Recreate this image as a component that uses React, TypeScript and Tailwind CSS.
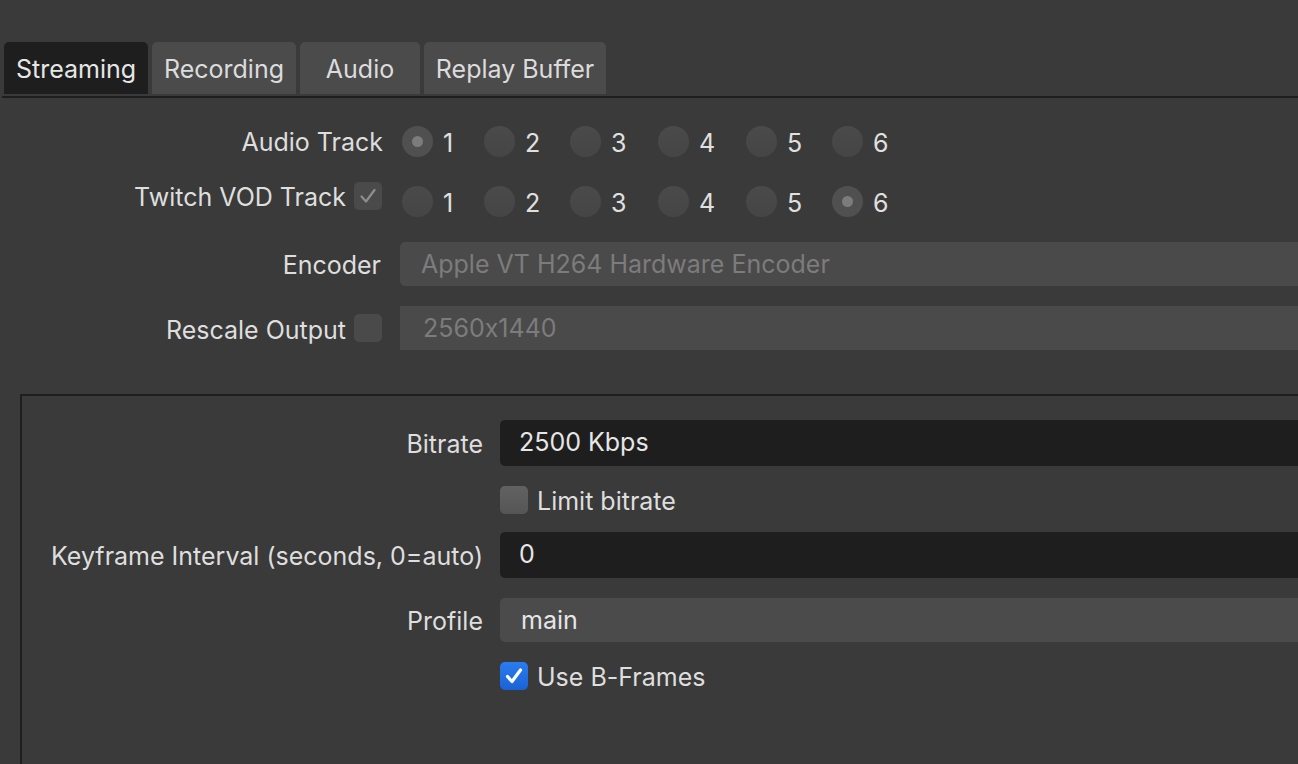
import React from 'react';

const TABS = [
  { name: 'Streaming', w: 'w-[144px]', active: true },
  { name: 'Recording', w: 'w-[144px]', active: false },
  { name: 'Audio', w: 'w-[120px]', active: false },
  { name: 'Replay Buffer', w: 'w-[182px]', active: false },
];

const TRACKS = [
  { n: 1, w: 'w-[82px]' },
  { n: 2, w: 'w-[86px]' },
  { n: 3, w: 'w-[88px]' },
  { n: 4, w: 'w-[88px]' },
  { n: 5, w: 'w-[86px]' },
  { n: 6, w: 'w-[60px]' },
];

function Radio({ checked }: { checked: boolean }) {
  return (
    <span
      className={`flex h-[31px] w-[31px] shrink-0 items-center justify-center rounded-full ${
        checked ? 'bg-[#505050]' : 'bg-gradient-to-b from-[#4a4a4a] to-[#454545]'
      }`}
    >
      {checked && <span className="h-[11px] w-[11px] rounded-full bg-[#7c7c7c]" />}
    </span>
  );
}

function TrackRow({ selected }: { selected: number }) {
  return (
    <div className="flex items-center">
      {TRACKS.map((t) => (
        <div key={t.n} className={`flex items-center ${t.w}`}>
          <Radio checked={t.n === selected} />
          <span className="ml-[10px] pt-[4px] leading-none text-[#e0e0e0]">{t.n}</span>
        </div>
      ))}
    </div>
  );
}

function Check({ tone }: { tone: 'dim' | 'empty' | 'light' | 'blue' }) {
  const bg =
    tone === 'blue'
      ? 'bg-gradient-to-b from-[#2a7cf0] to-[#1a62d6]'
      : tone === 'light'
        ? 'bg-gradient-to-b from-[#626262] to-[#555555]'
        : 'bg-[#4a4a4a]';
  return (
    <span className={`flex h-[28px] w-[28px] shrink-0 items-center justify-center rounded-[5px] ${bg}`}>
      {(tone === 'dim' || tone === 'blue') && (
        <svg viewBox="0 0 28 28" className="h-[28px] w-[28px]">
          <polyline
            points="7.5,14.5 12,19.5 20.5,8"
            fill="none"
            stroke={tone === 'blue' ? '#ffffff' : '#8e8e8e'}
            strokeWidth={tone === 'blue' ? 3.2 : 2.2}
            strokeLinecap="round"
            strokeLinejoin="round"
          />
        </svg>
      )}
    </span>
  );
}

export default function App() {
  return (
    <div
      className="h-[764px] w-[1298px] overflow-hidden bg-[#3a3a3a] text-[25px] text-[#dedede] [font-variant-ligatures:no-contextual]"
      style={{ fontFamily: 'Inter, "Noto Sans", sans-serif' }}
    >
      {/* tab bar */}
      <div className="flex gap-[4px] pl-[4px] pt-[42px]">
        {TABS.map((t) => (
          <div
            key={t.name}
            className={`flex h-[52px] items-center justify-center rounded-t-[5px] pt-[3px] ${t.w} ${
              t.active ? 'bg-[#1e1e1e] text-[#e6e6e6]' : 'bg-[#4b4b4b] text-[#dcdcdc]'
            }`}
          >
            {t.name}
          </div>
        ))}
      </div>
      <div className="ml-[2px] mt-[2px] h-[2px] bg-[#1e1e1e]" />

      {/* top form */}
      <div className="flex flex-col">
        <div className="mt-[28px] flex h-[31px] items-center">
          <div className="flex w-[383px] justify-end pt-[3px]">Audio Track</div>
          <div className="ml-[19px]">
            <TrackRow selected={1} />
          </div>
        </div>

        <div className="mt-[25px] flex items-start">
          <div className="flex h-[28px] w-[382px] items-center justify-end gap-[8px]">
            <span className="pt-[3px]">Twitch VOD Track</span>
            <Check tone="dim" />
          </div>
          <div className="ml-[20px] mt-[4px]">
            <TrackRow selected={6} />
          </div>
        </div>

        <div className="mt-[25px] flex h-[44px] items-center">
          <div className="flex w-[381px] justify-end pt-[3px]">Encoder</div>
          <div className="ml-[19px] flex h-[44px] flex-1 items-center rounded-l-[5px] bg-[#4a4a4a] pl-[21px] pt-[2px] text-[#7c7c7c]">
            Apple VT H264 Hardware Encoder
          </div>
        </div>

        <div className="mt-[20px] flex h-[44px] items-center">
          <div className="flex w-[382px] items-center justify-end gap-[8px]">
            <span className="pt-[5px]">Rescale Output</span>
            <Check tone="empty" />
          </div>
          <div className="ml-[18px] flex h-[44px] flex-1 items-center bg-[#4a4a4a] pl-[23px] pt-[2px] text-[#7c7c7c]">
            2560x1440
          </div>
        </div>
      </div>

      {/* encoder settings group */}
      <div className="ml-[20px] mt-[44px] h-[420px] w-[1400px] border-l-2 border-t-2 border-[#1e1e1e] pt-[24px]">
        <div className="flex h-[46px] items-center">
          <div className="flex w-[461px] justify-end pt-[3px]">Bitrate</div>
          <div className="ml-[17px] flex h-[46px] flex-1 items-center rounded-l-[5px] bg-[#1e1e1e] pl-[19px] text-[#e6e6e6]">
            2500 Kbps
          </div>
        </div>

        <div className="ml-[478px] mt-[20px] flex h-[28px] items-center gap-[9px]">
          <Check tone="light" />
          <span className="pt-[3px]">Limit bitrate</span>
        </div>

        <div className="mt-[18px] flex h-[46px] items-center">
          <div className="flex w-[461px] justify-end pt-[3px]">Keyframe Interval (seconds, 0=auto)</div>
          <div className="ml-[17px] flex h-[46px] flex-1 items-center rounded-l-[5px] bg-[#1e1e1e] pl-[19px] text-[#e6e6e6]">
            0
          </div>
        </div>

        <div className="mt-[20px] flex h-[44px] items-center">
          <div className="flex w-[461px] justify-end pt-[3px]">Profile</div>
          <div className="ml-[17px] flex h-[44px] flex-1 items-center rounded-l-[5px] bg-[#4b4b4b] pl-[21px] pt-[2px] text-[#e6e6e6]">
            main
          </div>
        </div>

        <div className="ml-[478px] mt-[20px] flex h-[28px] items-center gap-[9px]">
          <Check tone="blue" />
          <span className="pt-[3px]">Use B-Frames</span>
        </div>
      </div>
    </div>
  );
}
